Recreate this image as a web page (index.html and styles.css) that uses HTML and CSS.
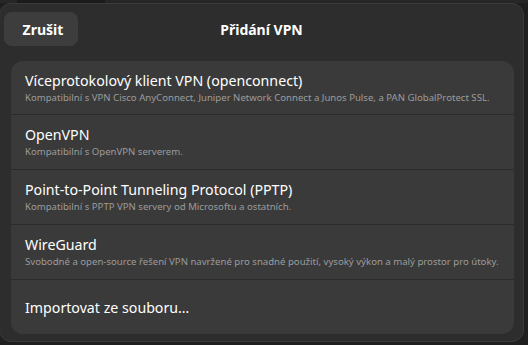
FILE: index.html
```html
<!DOCTYPE html>
<html lang="cs">
<head>
<meta charset="utf-8">
<link rel="stylesheet" href="styles.css">
</head>
<body>
<div class="backdrop">
  <div class="topstrip"><span class="tab"></span></div>
  <div class="dialog">
    <header class="headerbar">
      <button class="cancel">Zrušit</button>
      <h1 class="title">Přidání VPN</h1>
      <span class="spacer"></span>
    </header>
    <div class="list">
      <div class="row">
        <div class="row-title">Víceprotokolový klient VPN (openconnect)</div>
        <div class="row-sub">Kompatibilní s VPN Cisco AnyConnect, Juniper Network Connect a Junos Pulse, a PAN GlobalProtect SSL.</div>
      </div>
      <div class="row">
        <div class="row-title">OpenVPN</div>
        <div class="row-sub">Kompatibilní s OpenVPN serverem.</div>
      </div>
      <div class="row">
        <div class="row-title">Point-to-Point Tunneling Protocol (PPTP)</div>
        <div class="row-sub">Kompatibilní s PPTP VPN servery od Microsoftu a ostatních.</div>
      </div>
      <div class="row">
        <div class="row-title">WireGuard</div>
        <div class="row-sub">Svobodné a open-source řešení VPN navržené pro snadné použití, vysoký výkon a malý prostor pro útoky.</div>
      </div>
      <div class="row row-single">
        <div class="row-title">Importovat ze souboru…</div>
      </div>
    </div>
  </div>
</div>
</body>
</html>
```
FILE: styles.css
```css
html, body {
  margin: 0;
  padding: 0;
  width: 528px;
  height: 345px;
  overflow: hidden;
  background: #1f1f1f;
  font-family: "Noto Sans", "Open Sans", sans-serif;
}
.backdrop {
  width: 528px;
  height: 345px;
  display: flex;
  flex-direction: column;
}
.topstrip {
  height: 3px;
  background: #262626;
  display: flex;
}
.tab {
  margin-left: 17px;
  width: 88px;
  background: #1b1b1b;
}
.dialog {
  width: 525px;
  height: 339px;
  box-sizing: border-box;
  background: #2d2d2d;
  border: 1px solid #3a3a3a;
  border-radius: 12px;
  margin-left: -1px;
  display: flex;
  flex-direction: column;
}
.headerbar {
  display: flex;
  align-items: center;
  height: 46px;
  padding: 0 4px;
  box-sizing: border-box;
  padding-top: 4px;
}
.cancel {
  width: 74px;
  height: 34px;
  border: none;
  border-radius: 8px;
  background: #3d3d3d;
  color: #ffffff;
  font-family: inherit;
  font-weight: 700;
  font-size: 14px;
  padding: 0 0 0 4px;
}
.title {
  flex: 1;
  margin: 0;
  text-align: center;
  color: #ffffff;
  font-size: 14px;
  font-weight: 700;
}
.spacer {
  width: 74px;
}
.list {
  margin: 11px 9px 0 11px;
  background: #3a3a3a;
  border-radius: 12px;
  display: flex;
  flex-direction: column;
  overflow: hidden;
}
.row {
  height: 55px;
  box-sizing: border-box;
  padding: 10px 14px 0 14px;
  border-bottom: 1px solid #2b2b2b;
  display: flex;
  flex-direction: column;
}
.row:first-child {
  height: 54px;
}
.row:last-child {
  border-bottom: none;
  height: 54px;
}
.row-single {
  justify-content: center;
  padding-top: 0;
}
.row-title {
  color: #ffffff;
  font-size: 14.2px;
  line-height: 19px;
  white-space: nowrap;
}
.row-sub {
  color: #9c9c9c;
  font-size: 9.6px;
  line-height: 14px;
  margin-top: 1px;
  white-space: nowrap;
}
```
